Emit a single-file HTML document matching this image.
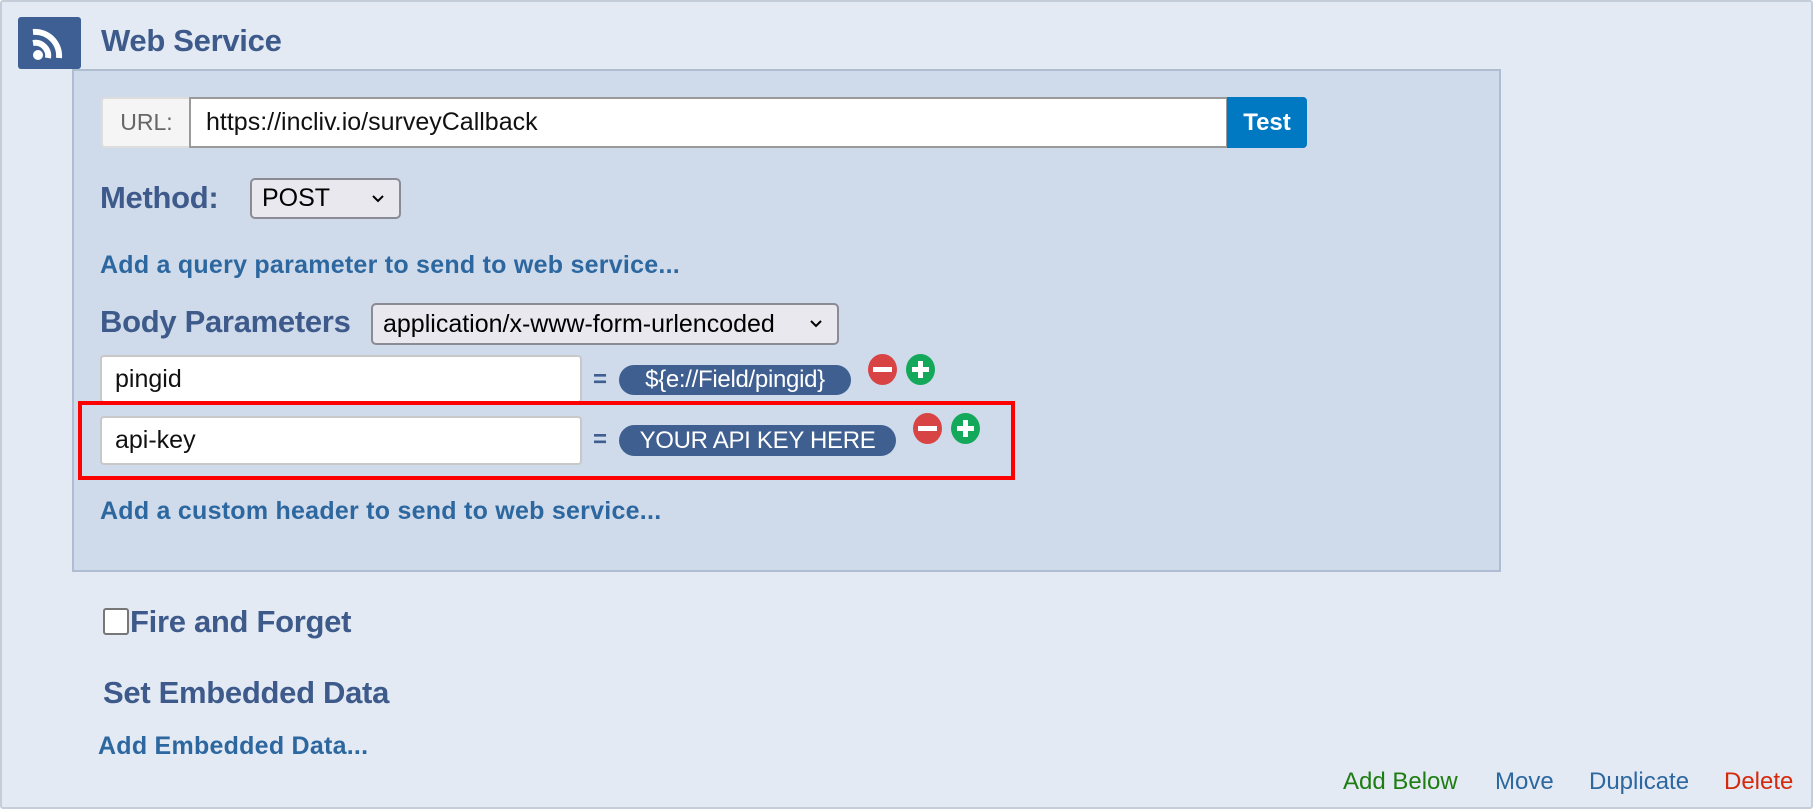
<!DOCTYPE html>
<html><head><meta charset="utf-8"><style>
*{box-sizing:border-box;margin:0;padding:0}
body{width:1816px;height:812px;background:#fff;font-family:"Liberation Sans",sans-serif;position:relative;overflow:hidden}
.abs{position:absolute}
#outer{left:0;top:0;width:1813px;height:809px;background:#e3eaf4;border:2px solid #c4ceda;border-radius:3px}
#icon{left:18px;top:17px;width:63px;height:52px;background:#3d5f93;border-radius:3px}
.title{color:#3d5a8a;font-weight:bold;letter-spacing:-0.3px}
#inner{left:72px;top:69px;width:1429px;height:503px;background:#cfdbea;border:2px solid #aebdd2}
.link{color:#2d679f;font-weight:bold;font-size:25px;letter-spacing:0.25px}
.inp{background:#fff;border:2px solid #c8c8c8;border-radius:4px;font-size:25px;color:#111;padding-left:13px;display:flex;align-items:center}
.sel{background:#e8e8ee;border:2px solid #8b8b95;border-radius:5px;font-size:25px;color:#000;display:flex;align-items:center;padding-left:10px}
.sel svg{position:absolute;right:14px;top:14px}
.pill{background:#3f5f91;color:#fff;border-radius:16px;font-size:24px;display:flex;align-items:center;justify-content:center;letter-spacing:-0.3px}
.eq{color:#3f5f91;font-weight:bold;font-size:24px}
.circ{width:29px;height:31px;border-radius:50%}
.circ svg{display:block}
.foot{font-size:24px;top:768px}
</style></head><body>
<div id="outer" class="abs"></div>
<div id="icon" class="abs"><svg width="63" height="52" viewBox="0 0 63 52"><circle cx="20" cy="38" r="5" fill="#fff"/><path d="M15 26 A13 13 0 0 1 30 41" stroke="#fff" stroke-width="6" fill="none"/><path d="M15 15 A24 24 0 0 1 41 41" stroke="#fff" stroke-width="6" fill="none"/></svg></div>
<div class="abs title" style="left:101px;top:23px;font-size:31px">Web Service</div>
<div id="inner" class="abs"></div>
<div class="abs" style="left:101px;top:97px;width:89px;height:51px;background:#f5f5f5;border:2px solid #ddd;border-right:none;border-radius:4px 0 0 4px;font-size:23px;color:#666;display:flex;align-items:center;justify-content:center">URL:</div>
<div class="abs" style="left:189px;top:97px;width:1039px;height:51px;background:#fff;border:2px solid #9a9a9a;font-size:25px;color:#111;display:flex;align-items:center;padding-left:15px">https://incliv.io/surveyCallback</div>
<div class="abs" style="left:1227px;top:97px;width:80px;height:51px;background:#0079c2;border-radius:0 4px 4px 0;color:#fff;font-weight:bold;font-size:24px;display:flex;align-items:center;justify-content:center">Test</div>
<div class="abs title" style="left:100px;top:180px;font-size:31px">Method:</div>
<div class="abs sel" style="left:250px;top:178px;width:151px;height:41px">POST<svg width="14" height="10"><path d="M2 2 L7 7 L12 2" stroke="#000" stroke-width="2" fill="none"/></svg></div>
<div class="abs link" style="left:100px;top:251px">Add a query parameter to send to web service...</div>
<div class="abs title" style="left:100px;top:304px;font-size:31px">Body Parameters</div>
<div class="abs sel" style="left:371px;top:303px;width:468px;height:42px">application/x-www-form-urlencoded<svg width="14" height="10"><path d="M2 2 L7 7 L12 2" stroke="#000" stroke-width="2" fill="none"/></svg></div>
<div class="abs inp" style="left:100px;top:355px;width:482px;height:48px">pingid</div>
<div class="abs eq" style="left:593px;top:366px">=</div>
<div class="abs pill" style="left:619px;top:365px;width:232px;height:30px">${e://Field/pingid}</div>
<div class="abs circ" style="left:868px;top:354px;background:#d84444"><svg width="29" height="31"><rect x="5" y="13" width="19" height="5" fill="#fff"/></svg></div>
<div class="abs circ" style="left:906px;top:354px;background:#14a85a"><svg width="29" height="31"><rect x="6" y="13" width="17" height="5" fill="#fff"/><rect x="12" y="7" width="5" height="17" fill="#fff"/></svg></div>
<div class="abs" style="left:78px;top:401px;width:937px;height:79px;border:4px solid #f00"></div>
<div class="abs inp" style="left:100px;top:416px;width:482px;height:49px">api-key</div>
<div class="abs eq" style="left:593px;top:426px">=</div>
<div class="abs pill" style="left:619px;top:425px;width:277px;height:31px">YOUR API KEY HERE</div>
<div class="abs circ" style="left:913px;top:413px;background:#d84444"><svg width="29" height="31"><rect x="5" y="13" width="19" height="5" fill="#fff"/></svg></div>
<div class="abs circ" style="left:951px;top:413px;background:#14a85a"><svg width="29" height="31"><rect x="6" y="13" width="17" height="5" fill="#fff"/><rect x="12" y="7" width="5" height="17" fill="#fff"/></svg></div>
<div class="abs link" style="left:100px;top:497px">Add a custom header to send to web service...</div>
<div class="abs" style="left:103px;top:608px;width:26px;height:27px;background:#fff;border:2px solid #777;border-radius:3px"></div>
<div class="abs title" style="left:130px;top:604px;font-size:31px">Fire and Forget</div>
<div class="abs title" style="left:103px;top:675px;font-size:31px">Set Embedded Data</div>
<div class="abs link" style="left:98px;top:732px">Add Embedded Data...</div>
<div class="abs foot" style="left:1343px;color:#1e7d12">Add Below</div>
<div class="abs foot" style="left:1495px;color:#2d679f">Move</div>
<div class="abs foot" style="left:1589px;color:#2d679f">Duplicate</div>
<div class="abs foot" style="left:1724px;color:#d4290b">Delete</div>
</body></html>
